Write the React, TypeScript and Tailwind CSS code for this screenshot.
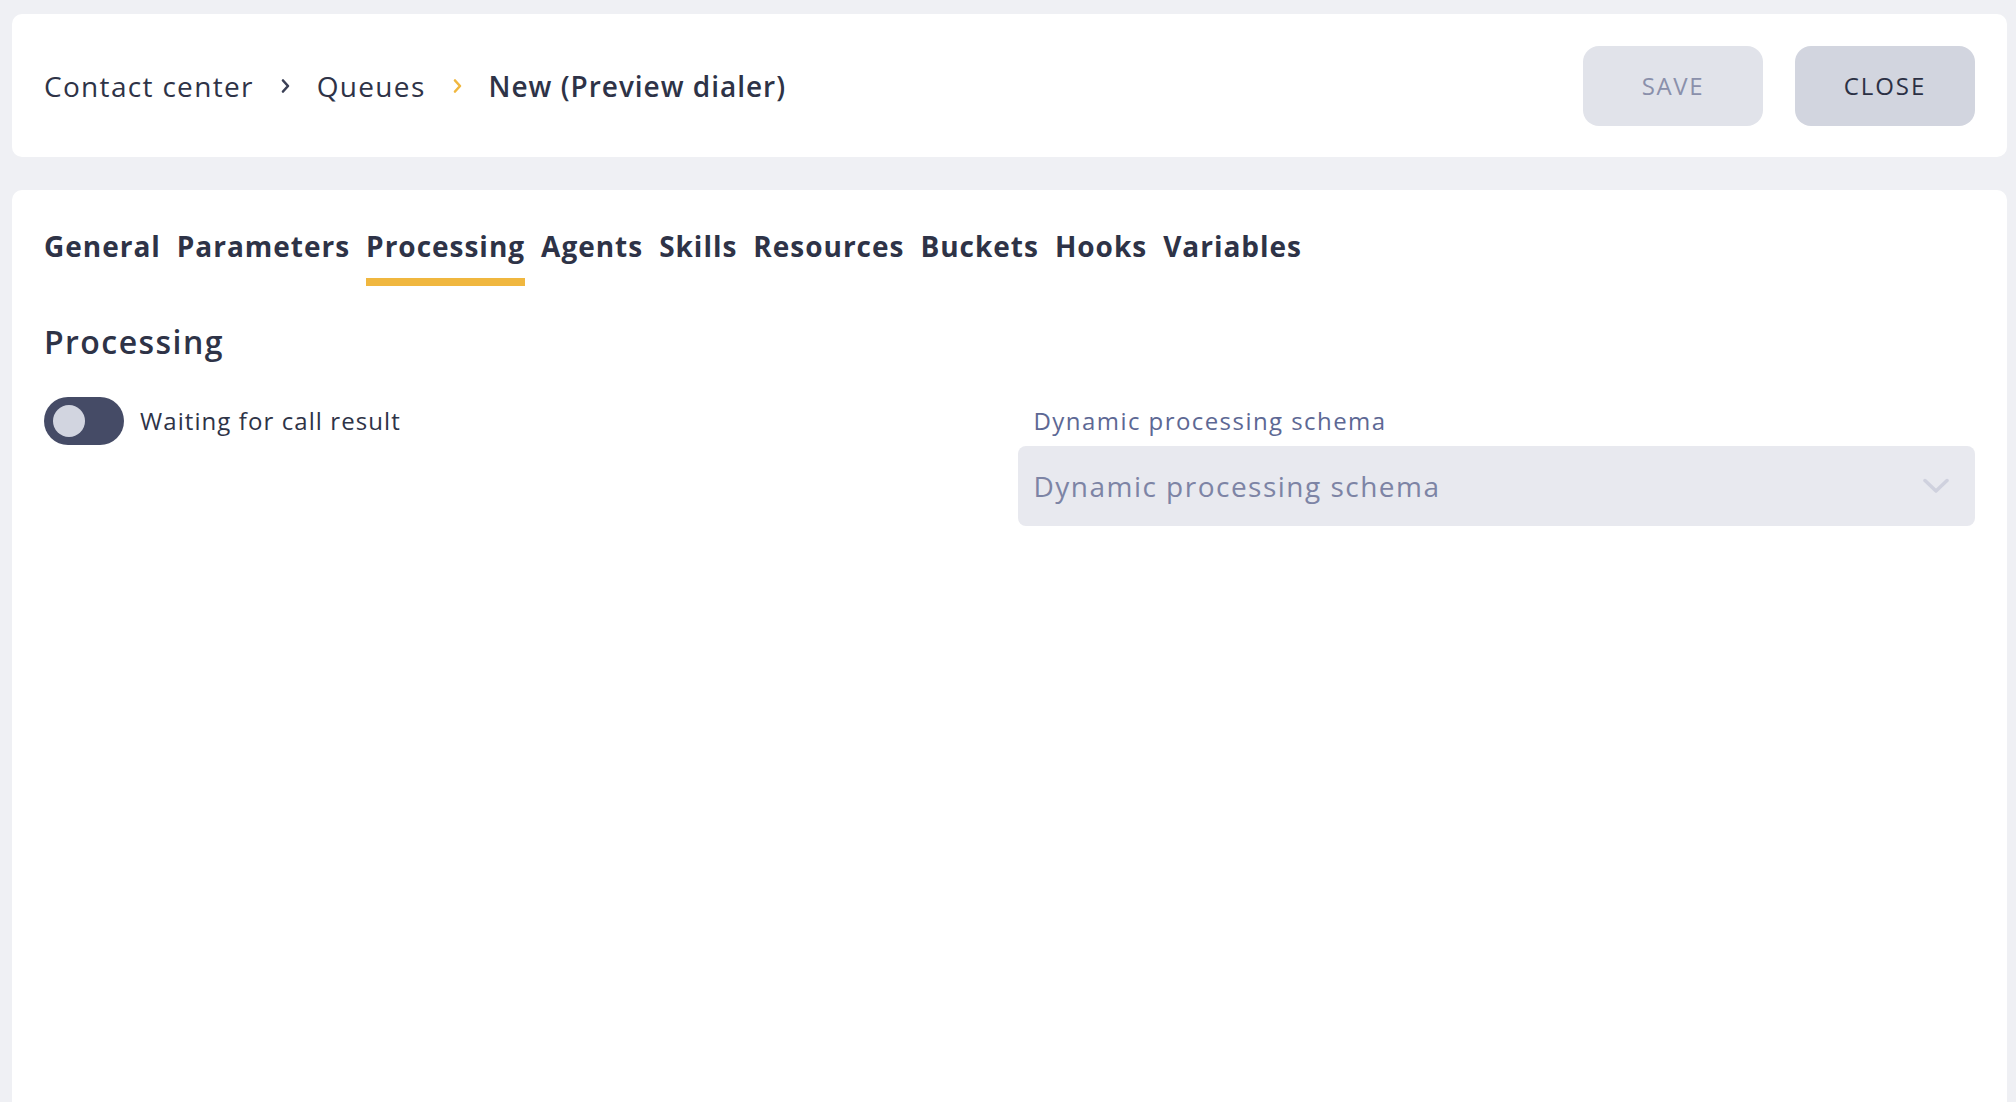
import React from 'react';

const tabs = ['General', 'Parameters', 'Processing', 'Agents', 'Skills', 'Resources', 'Buckets', 'Hooks', 'Variables'];

function Chevron({ color }: { color: string }) {
  return (
    <svg width="9" height="16" viewBox="0 0 9 16" fill="none">
      <path d="M2 2.5 L7 8 L2 13.5" stroke={color} strokeWidth="2.6" strokeLinecap="round" strokeLinejoin="round" />
    </svg>
  );
}

function Header() {
  return (
    <div className="h-[143px] shrink-0 bg-white rounded-[10px] px-8 flex items-center justify-between">
      <div className="flex items-center gap-[27px] text-[28px] leading-9 text-[#2e3347] tracking-[0.047em]">
        <span>Contact center</span>
        <Chevron color="#3a3f55" />
        <span>Queues</span>
        <Chevron color="#f0b73f" />
        <span className="font-semibold tracking-[0.035em]">New (Preview dialer)</span>
      </div>
      <div className="flex items-center gap-8">
        <button className="w-[180px] h-20 rounded-2xl bg-[#e1e3ea] text-[24px] font-medium text-[#8a90ab] tracking-[0.07em]">
          SAVE
        </button>
        <button className="w-[180px] h-20 rounded-2xl bg-[#d2d5df] text-[24px] font-medium text-[#2b3044] tracking-[0.08em]">
          CLOSE
        </button>
      </div>
    </div>
  );
}

function Toggle() {
  return (
    <div className="w-20 h-12 shrink-0 rounded-full bg-[#454b66] flex items-center pl-[9px]">
      <div className="w-8 h-8 rounded-full bg-[#d2d5e0]" />
    </div>
  );
}

export default function App() {
  return (
    <div
      className="min-h-screen bg-[#eff0f4] pl-3 pr-[9px] pt-[14px] flex flex-col gap-[33px]"
      style={{ fontFamily: '"Open Sans", "Noto Sans", sans-serif' }}
    >
      <Header />
      <div className="flex-1 bg-white rounded-t-[10px] px-8 pt-[38px]">
        <div className="flex items-start gap-4">
          {tabs.map((t) => (
            <div key={t} className="flex flex-col">
              <span className="text-[28px] leading-9 font-bold text-[#2e3347] tracking-[0.035em]">{t}</span>
              {t === 'Processing' ? (
                <div className="mt-[14px] h-2 bg-[#f0b73f]" />
              ) : (
                <div className="mt-[14px] h-2" />
              )}
            </div>
          ))}
        </div>
        <h2 className="mt-9 text-[32px] leading-10 font-semibold text-[#2e3347] tracking-[0.045em]">Processing</h2>
        <div className="mt-[35px] grid grid-cols-2 gap-4">
          <div className="flex items-start gap-4">
            <Toggle />
            <span className="text-[24px] leading-[48px] text-[#2e3347] tracking-[0.045em]">Waiting for call result</span>
          </div>
          <div className="flex flex-col">
            <label className="pl-4 pt-2 text-[24px] leading-8 font-medium text-[#5d6894] tracking-[0.06em]">
              Dynamic processing schema
            </label>
            <div className="mt-[9px] h-20 rounded-lg bg-[#e8e9ef] flex items-center justify-between pl-4 pr-[26px]">
              <span className="text-[28px] text-[#7d84a5] tracking-[0.053em]">Dynamic processing schema</span>
              <svg width="26" height="16" viewBox="0 0 26 16" fill="none">
                <path d="M2 2.5 L13 13 L24 2.5" stroke="#cfd1de" strokeWidth="3.5" strokeLinecap="round" strokeLinejoin="round" />
              </svg>
            </div>
          </div>
        </div>
      </div>
    </div>
  );
}
